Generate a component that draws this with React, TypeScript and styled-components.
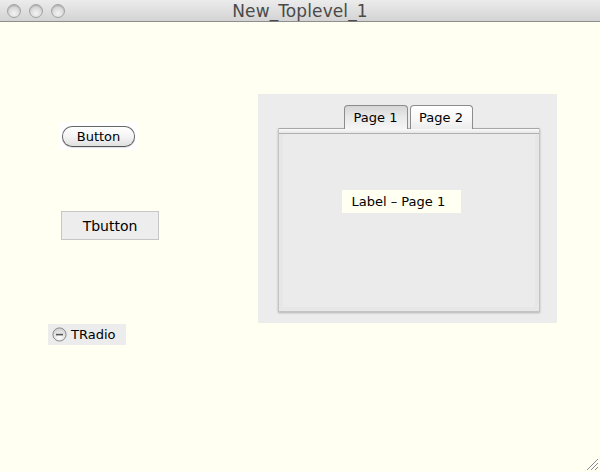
import React, { FC } from "react";
import styled, { createGlobalStyle } from "styled-components";

const GlobalStyle = createGlobalStyle`
  html, body {
    margin: 0;
    padding: 0;
    background: #fffff2;
  }
  body {
    font-family: "DejaVu Sans", "Liberation Sans", sans-serif;
    color: #000000;
  }
`;

const Window = styled.div`
  width: 600px;
  height: 472px;
  display: flex;
  flex-direction: column;
  background: #fffff2;
  overflow: hidden;
`;

const TitleBar = styled.div`
  position: relative;
  height: 21px;
  flex: 0 0 21px;
  display: flex;
  align-items: center;
  justify-content: center;
  background: linear-gradient(#ececec, #d3d3d3);
  border-bottom: 1px solid #8e8e8e;
`;

const Lights = styled.div`
  position: absolute;
  left: 7px;
  top: 4px;
  display: flex;
  gap: 8px;
`;

const Light = styled.span`
  width: 12px;
  height: 12px;
  border-radius: 50%;
  border: 0.5px solid #a3a3a3;
  background: radial-gradient(circle at 50% 70%, #f4f4f4 0%, #d9d9d9 55%, #bdbdbd 100%);
  box-shadow: inset 0 1px 1px rgba(0, 0, 0, 0.15);
`;

const Title = styled.div`
  font-size: 17px;
  color: #4a4a4a;
  margin-top: 1px;
  letter-spacing: 0.1px;
`;

const Canvas = styled.div`
  position: relative;
  flex: 1;
  display: flex;
  padding: 72px 0 0 48px;
`;

const LeftColumn = styled.div`
  width: 210px;
  display: flex;
  flex-direction: column;
  align-items: flex-start;
`;

const PillHolder = styled.div`
  margin: 28px 0 0 12px;
  width: 77px;
  height: 28px;
  background: #ffffff;
  padding: 4px 0 0 2px;
  box-sizing: border-box;
`;

const PillButton = styled.div`
  width: 73px;
  height: 21px;
  box-sizing: border-box;
  border: 1px solid #666666;
  border-bottom-color: #555555;
  border-radius: 10px;
  background: linear-gradient(#ffffff 0%, #f4f4f4 50%, #e0e0e0 100%);
  font-size: 13px;
  display: flex;
  align-items: center;
  justify-content: center;
  box-shadow: 0 1px 1px rgba(0, 0, 0, 0.12);
`;

const TButton = styled.div`
  margin: 61px 0 0 13px;
  width: 98px;
  height: 29px;
  box-sizing: border-box;
  border: 1px solid #c6c6c6;
  background: #ededed;
  font-size: 14px;
  display: flex;
  align-items: center;
  justify-content: center;
`;

const Radio = styled.div`
  margin-top: 84px;
  width: 78px;
  height: 21px;
  background: #ececec;
  display: flex;
  align-items: center;
  gap: 4px;
  padding-left: 4px;
  box-sizing: border-box;
  font-size: 13px;
`;

const Notebook = styled.div`
  width: 299px;
  height: 229px;
  background: #ececec;
  display: flex;
  flex-direction: column;
  align-items: center;
  padding-top: 11px;
  box-sizing: border-box;
`;

const TabRow = styled.div`
  display: flex;
  gap: 2px;
  margin-left: 1px;
  position: relative;
  z-index: 1;
  margin-bottom: -1px;
`;

const Tab = styled.div<{ $active?: boolean }>`
  height: 24px;
  padding: 0;
  white-space: nowrap;
  box-sizing: border-box;
  border: 1px solid #8c8c8c;
  border-bottom: none;
  border-radius: 4px 4px 0 0;
  font-size: 13px;
  display: flex;
  align-items: center;
  justify-content: center;
  width: ${(p) => (p.$active ? "64px" : "63px")};
  background: ${(p) =>
    p.$active
      ? "linear-gradient(#d6d6d6 0%, #e8e8e8 45%, #f6f6f6 100%)"
      : "linear-gradient(#ffffff 0%, #f7f7f7 60%, #ececec 100%)"};
`;

const Panel = styled.div`
  width: 262px;
  height: 184px;
  margin-left: 2px;
  box-sizing: border-box;
  display: flex;
  flex-direction: column;
  border: 1px solid #c4c4c4;
  border-top: none;
  box-shadow: 0 1px 2px rgba(0, 0, 0, 0.25);
`;

const PanelStrip = styled.div`
  height: 6px;
  flex: 0 0 6px;
  box-sizing: border-box;
  border-top: 1px solid #a8a8a8;
  border-bottom: 1px solid #b0b0b0;
  background: linear-gradient(#fafafa, #e6e6e6);
`;

const PanelBody = styled.div`
  flex: 1;
  background: #ebebeb;
  border: 4px solid #e7e7e7;
  border-top: none;
  padding: 56px 0 0 59px;
`;

const Label = styled.div`
  width: 119px;
  height: 23px;
  background: #fffff2;
  font-size: 13px;
  display: flex;
  align-items: center;
  padding-left: 10px;
  box-sizing: border-box;
  white-space: nowrap;
`;

const Grip = styled.svg`
  position: absolute;
  right: 1px;
  bottom: 1px;
`;

const RadioIcon: FC = () => (
  <svg width="15" height="15" viewBox="0 0 15 15">
    <defs>
      <radialGradient id="rg" cx="50%" cy="70%" r="60%">
        <stop offset="0%" stopColor="#ffffff" />
        <stop offset="100%" stopColor="#d4d4d4" />
      </radialGradient>
    </defs>
    <circle cx="7.5" cy="7.5" r="6.6" fill="url(#rg)" stroke="#8a8a8a" strokeWidth="1" />
    <rect x="4" y="6.8" width="7" height="1.6" fill="#555555" />
  </svg>
);

export const App: FC = () => {
  return (
    <Window>
      <GlobalStyle />
      <TitleBar>
        <Lights>
          <Light />
          <Light />
          <Light />
        </Lights>
        <Title>New_Toplevel_1</Title>
      </TitleBar>
      <Canvas>
        <LeftColumn>
          <PillHolder>
            <PillButton>Button</PillButton>
          </PillHolder>
          <TButton>Tbutton</TButton>
          <Radio>
            <RadioIcon />
            TRadio
          </Radio>
        </LeftColumn>
        <Notebook>
          <TabRow>
            <Tab $active>Page 1</Tab>
            <Tab>Page 2</Tab>
          </TabRow>
          <Panel>
            <PanelStrip />
            <PanelBody>
              <Label>Label – Page 1</Label>
            </PanelBody>
          </Panel>
        </Notebook>
        <Grip width="14" height="14" viewBox="0 0 14 14">
          <path d="M13 2 L2 13 M13 6 L6 13 M13 10 L10 13" stroke="#8a8a8a" strokeWidth="1" />
          <path d="M13 3 L3 13 M13 7 L7 13 M13 11 L11 13" stroke="#ffffff" strokeWidth="1" />
        </Grip>
      </Canvas>
    </Window>
  );
};

export default App;
